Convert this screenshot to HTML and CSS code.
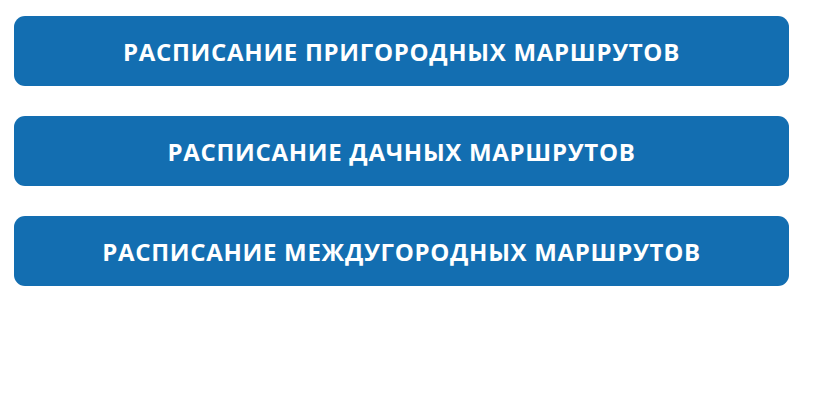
FILE: index.html
```html
<!DOCTYPE html>
<html lang="ru">
<head>
    <meta charset="UTF-8">
    <meta name="viewport" content="width=device-width, initial-scale=1.0">
    <title>Расписание маршрутов</title>
    <link rel="stylesheet" href="styles.css">
</head>
<body>
    <div class="routes">
        <a class="route-btn" href="#">Расписание пригородных маршрутов</a>
        <a class="route-btn" href="#">Расписание дачных маршрутов</a>
        <a class="route-btn" href="#">Расписание междугородных маршрутов</a>
    </div>
</body>
</html>
```

FILE: styles.css
```css
body {
    margin: 0;
    background: #fff;
    font-family: "Open Sans", "Noto Sans", sans-serif;
}
.routes {
    width: 775px;
    padding: 16px 0 0 14px;
    display: flex;
    flex-direction: column;
    gap: 30px;
}
.route-btn {
    display: flex;
    align-items: center;
    justify-content: center;
    height: 70px;
    border-radius: 11px;
    background-color: #136eb1;
    color: #fff;
    font-size: 24px;
    font-weight: 700;
    letter-spacing: 0.7px;
    text-transform: uppercase;
    text-decoration: none;
}
```
